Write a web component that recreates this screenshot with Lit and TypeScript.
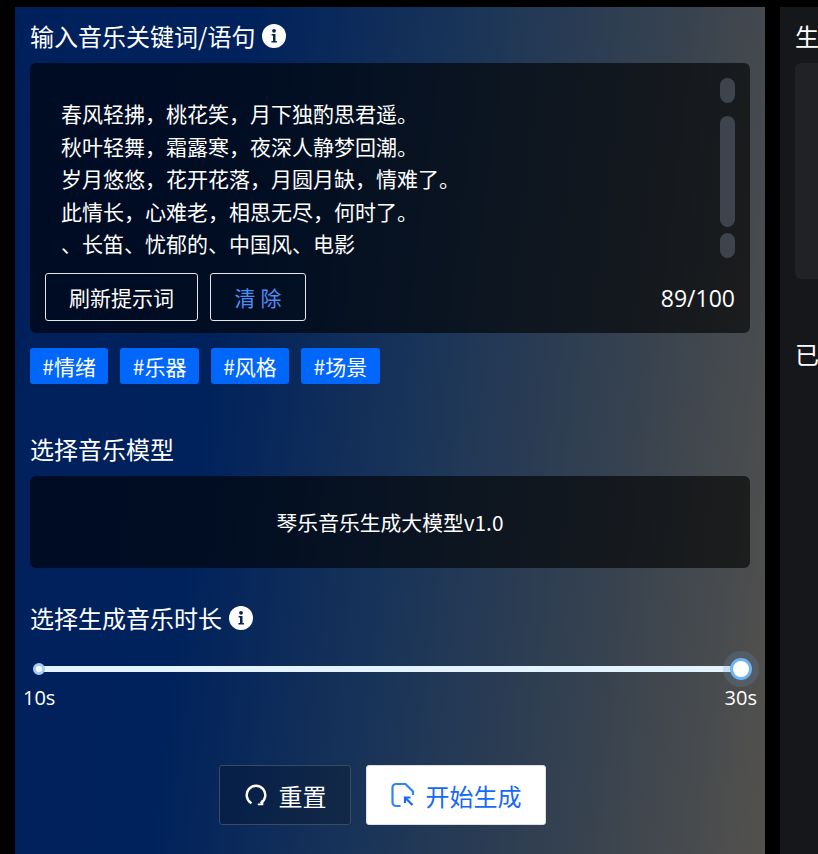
import { LitElement, html, css } from 'lit';
import { customElement } from 'lit/decorators.js';

const infoIcon = html`<svg class="info" viewBox="0 0 24 24" width="24" height="24">
  <circle cx="12" cy="12" r="12" fill="#fff"></circle>
  <circle cx="12" cy="6.8" r="1.9" fill="#0a2350"></circle>
  <path d="M9.6 10h3.9v7h1.4v1.6H9.4V17h1.6v-5.4H9.6z" fill="#0a2350"></path>
</svg>`;

@customElement('app-root')
export class AppRoot extends LitElement {
  static override styles = css`
    :host {
      display: block;
      width: 818px;
      height: 854px;
      overflow: hidden;
      background: #000;
      font-family: 'Noto Sans CJK SC', 'Liberation Sans', sans-serif;
      color: #fff;
    }
    * {
      box-sizing: border-box;
    }
    .page {
      display: flex;
      gap: 15px;
      width: 1200px;
      height: 854px;
      padding: 7px 0 0 15px;
    }
    .left {
      flex: 0 0 750px;
      padding: 0 15px;
      background: linear-gradient(97deg, #00205c 0%, #00225c 28%, #1b3558 54%, #37424f 78%, #53514d 100%);
    }
    .right {
      flex: 0 0 400px;
      padding: 0 15px;
      background: #16171a;
    }
    .title {
      display: flex;
      align-items: center;
      gap: 7px;
      height: 56px;
      padding-bottom: 0;
      padding-top: 2px;
      font-size: 24px;
      line-height: 32px;
    }
    .editor {
      height: 270px;
      padding: 15px;
      border-radius: 6px;
      background: rgba(0, 0, 0, 0.62);
    }
    .editor-top {
      display: flex;
      justify-content: space-between;
      height: 180px;
    }
    .poem {
      padding: 19px 0 0 16px;
      font-size: 21px;
      line-height: 32.6px;
      white-space: pre-line;
    }
    .scroll {
      display: flex;
      flex-direction: column;
      gap: 6px;
      width: 15px;
    }
    .scroll span {
      border-radius: 8px;
      background: #3e444d;
    }
    .scroll span:nth-child(1) {
      height: 25px;
      margin-bottom: 7px;
    }
    .scroll span:nth-child(2) {
      height: 111px;
    }
    .scroll span:nth-child(3) {
      height: 25px;
    }
    .editor-bottom {
      display: flex;
      align-items: center;
      gap: 12px;
      margin-top: 15px;
    }
    .outline {
      height: 48px;
      border: 1px solid #e6e6e6;
      border-radius: 3px;
      background: transparent;
      color: #fff;
      font: inherit;
      font-size: 21px;
      padding: 0;
    }
    .refresh {
      width: 153px;
    }
    .clear {
      width: 96px;
      color: #4b8ff5;
      letter-spacing: 5px;
      padding-left: 5px;
    }
    .count {
      margin-left: auto;
      padding-top: 2px;
      font-family: 'Open Sans', 'Noto Sans', sans-serif;
      font-size: 23px;
    }
    .tags {
      display: flex;
      gap: 12px;
      margin-top: 15px;
    }
    .tag {
      display: flex;
      align-items: center;
      justify-content: center;
      width: 78.4px;
      height: 36px;
      border-radius: 3px;
      background: #0167fb;
      font-size: 21px;
    }
    .model-title {
      margin-top: 45px;
      font-size: 24px;
      line-height: 40px;
    }
    .model {
      display: flex;
      align-items: center;
      justify-content: center;
      height: 92px;
      margin-top: 7px;
      border-radius: 6px;
      background: rgba(0, 0, 0, 0.62);
      font-size: 20.8px;
    }
    .duration-title {
      display: flex;
      align-items: center;
      gap: 7px;
      margin-top: 30px;
      font-size: 24px;
      line-height: 40px;
    }
    .slider {
      position: relative;
      height: 12px;
      margin: 25px 0 0 8px;
      width: 703px;
    }
    .track {
      position: absolute;
      left: 0;
      right: 0;
      top: 3px;
      height: 6px;
      background: #e3f3ff;
    }
    .dot {
      position: absolute;
      left: -5px;
      top: 0;
      width: 12px;
      height: 12px;
      border-radius: 50%;
      background: #fff;
      border: 3px solid #a7cdf4;
    }
    .knob {
      position: absolute;
      right: -11px;
      top: -5px;
      width: 22px;
      height: 22px;
      border-radius: 50%;
      background: #fff;
      border: 3px solid #6fb3f2;
      box-shadow: 0 0 0 7px rgba(111, 150, 190, 0.22);
    }
    .marks {
      display: flex;
      justify-content: space-between;
      margin: 10px -7px 0 -7px;
      font-family: 'Open Sans', 'Noto Sans', sans-serif;
      font-size: 20px;
      line-height: 26px;
    }
    .actions {
      display: flex;
      justify-content: center;
      gap: 15px;
      margin-top: 54px;
      padding-right: 15px;
    }
    .action {
      display: flex;
      align-items: center;
      justify-content: center;
      height: 60px;
      border-radius: 3px;
      font: inherit;
      font-size: 24px;
      padding: 0;
    }
    .reset {
      gap: 11px;
      width: 132px;
      background: rgba(0, 0, 0, 0.2);
      border: 1px solid #3a4a60;
      color: #fff;
    }
    .start {
      gap: 11px;
      width: 180px;
      background: #fff;
      border: 1px solid #dcdfe6;
      color: #1668f5;
    }
    .preview {
      height: 216px;
      border-radius: 6px;
      background: #212226;
    }
    .done {
      margin-top: 59px;
      font-size: 24px;
      line-height: 32px;
    }
  `;

  override render() {
    return html`
      <div class="page">
        <section class="left">
          <div class="title">输入音乐关键词/语句 ${infoIcon}</div>
          <div class="editor">
            <div class="editor-top">
              <div class="poem">春风轻拂，桃花笑，月下独酌思君遥。
秋叶轻舞，霜露寒，夜深人静梦回潮。
岁月悠悠，花开花落，月圆月缺，情难了。
此情长，心难老，相思无尽，何时了。
、长笛、忧郁的、中国风、电影</div>
              <div class="scroll"><span></span><span></span><span></span></div>
            </div>
            <div class="editor-bottom">
              <button class="outline refresh">刷新提示词</button>
              <button class="outline clear">清除</button>
              <span class="count">89/100</span>
            </div>
          </div>
          <div class="tags">
            <span class="tag">#情绪</span>
            <span class="tag">#乐器</span>
            <span class="tag">#风格</span>
            <span class="tag">#场景</span>
          </div>
          <div class="model-title">选择音乐模型</div>
          <div class="model">琴乐音乐生成大模型v1.0</div>
          <div class="duration-title">选择生成音乐时长 ${infoIcon}</div>
          <div class="slider">
            <div class="track"></div>
            <div class="dot"></div>
            <div class="knob"></div>
          </div>
          <div class="marks"><span>10s</span><span>30s</span></div>
          <div class="actions">
            <button class="action reset">
              <svg viewBox="0 0 24 24" width="24" height="24" fill="none" stroke="#fff" stroke-width="2.4">
                <path d="M7.5 20.2A9.3 9.3 0 1 1 16.5 20.2"></path>
                <path d="M13.8 21.4h4.6v-4.4" stroke-width="1.8"></path>
              </svg>
              重置
            </button>
            <button class="action start">
              <svg viewBox="0 0 24 26" width="24" height="26" fill="none" stroke="#2f85f8" stroke-width="2.2">
                <path d="M9.5 24H5A3.5 3.5 0 0 1 1.5 20.5V5.5A3.5 3.5 0 0 1 5 2H14.5L22 9.5V13"></path>
                <path d="M14 15.5L21.5 23" stroke="#1668f5"></path>
                <path d="M14 21V15.5H19.5" stroke="#1668f5"></path>
              </svg>
              开始生成
            </button>
          </div>
        </section>
        <section class="right">
          <div class="title">生成结果</div>
          <div class="preview"></div>
          <div class="done">已生成音乐</div>
        </section>
      </div>
    `;
  }
}
